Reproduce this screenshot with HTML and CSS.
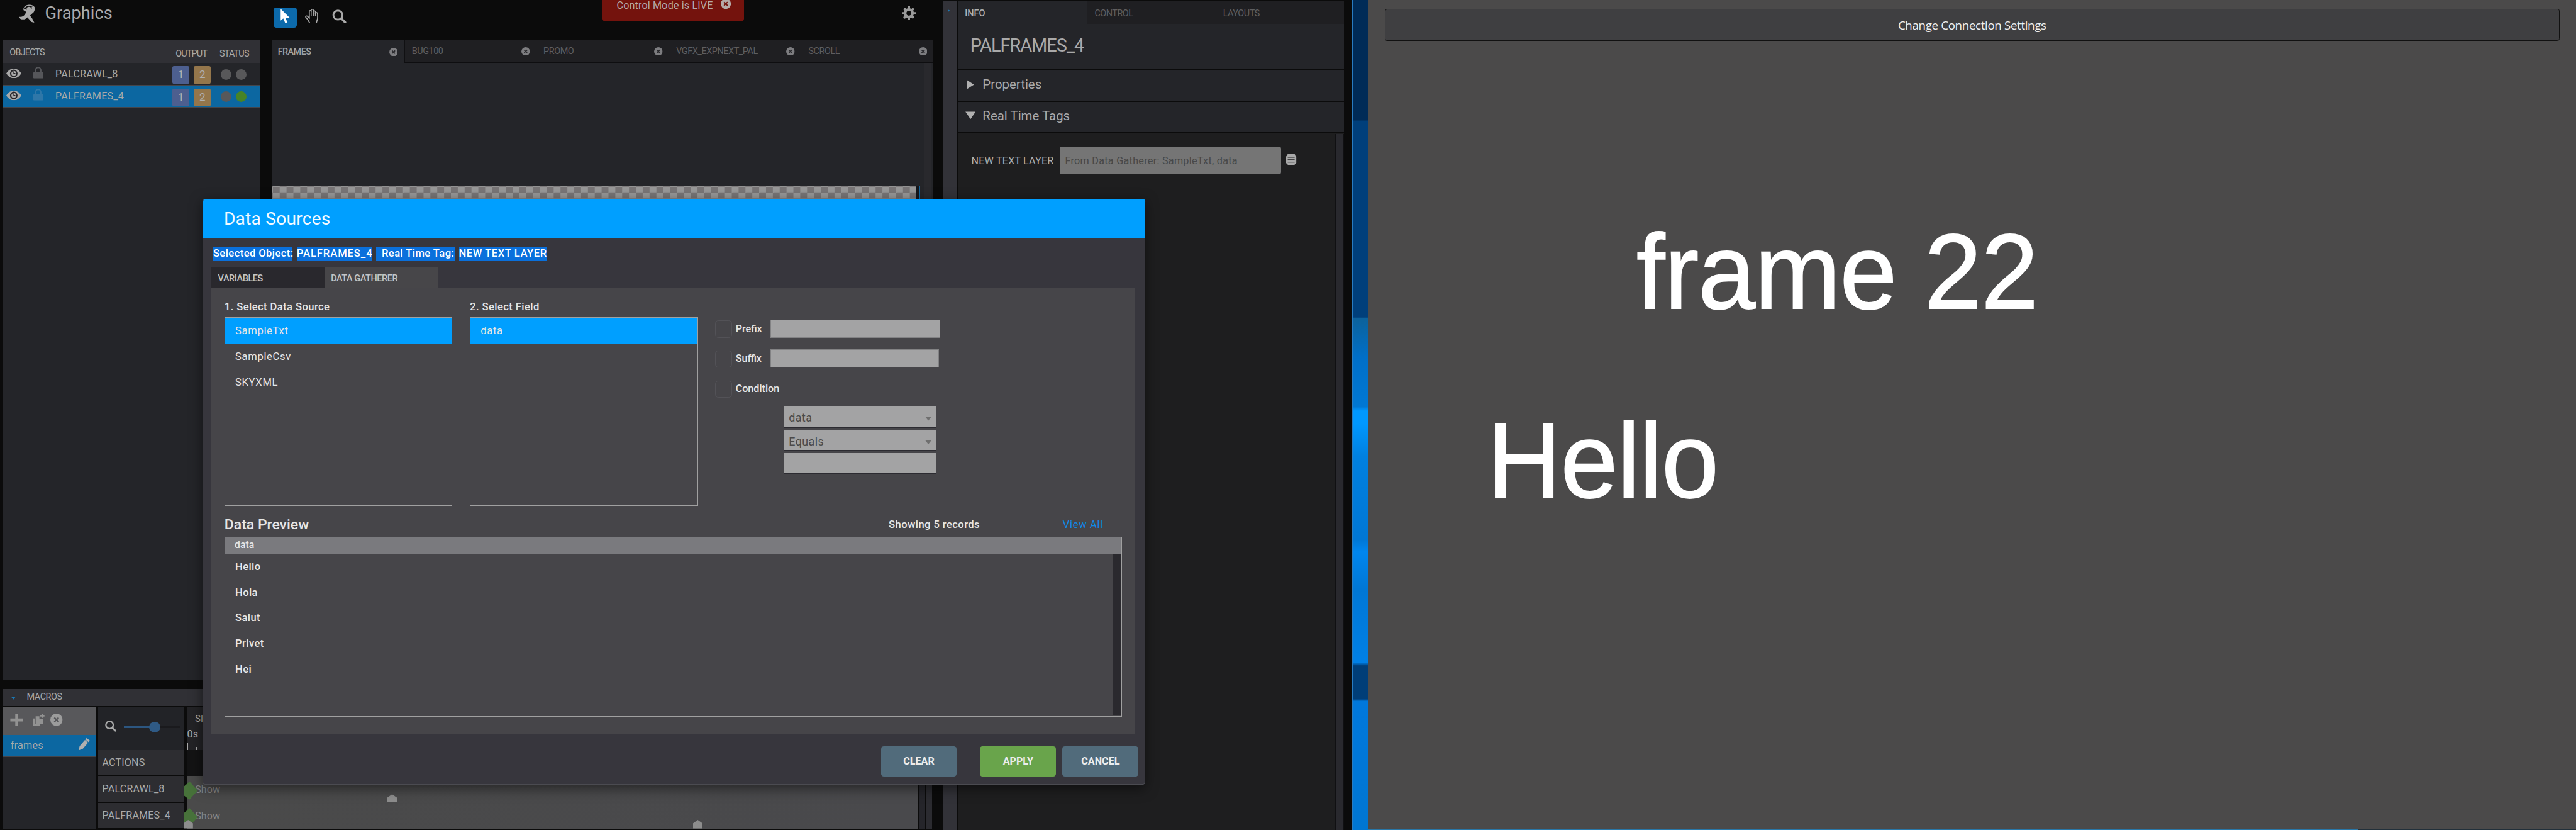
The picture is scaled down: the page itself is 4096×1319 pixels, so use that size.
FILE: index.html
```html
<!DOCTYPE html>
<html lang="en">
<head>
<meta charset="utf-8">
<title>Graphics</title>
<link rel="stylesheet" href="styles.css">
</head>
<body>
<svg width="0" height="0" class="defs">
  <symbol id="close" viewBox="0 0 20 20"><circle cx="10" cy="10" r="10" fill="currentColor"/><path d="M6.5 6.5l7 7M13.5 6.5l-7 7" stroke="var(--cross)" stroke-width="2.4"/></symbol>
  <symbol id="eye" viewBox="0 0 28 18"><path d="M0 9C4 2.500 9 0 14 0s10 2.500 14 9c-4 6.500-9 9-14 9S4 15.500 0 9z" fill="#a9a9a9"/><circle cx="14" cy="9" r="5.800" fill="none" stroke="#26262a" stroke-width="2.600"/><path d="M14 5v4h3" fill="none" stroke="#26262a" stroke-width="1.500"/></symbol>
  <symbol id="lock" viewBox="0 0 18 22"><path d="M4 11V6.500a5 5 0 0 1 10 0V11" fill="none" stroke="currentColor" stroke-width="2.400"/><rect x="0" y="10" width="18" height="12" rx="1.500" fill="currentColor"/></symbol>
  <symbol id="search" viewBox="0 0 26 26"><circle cx="10.500" cy="10.500" r="8.500" fill="none" stroke="currentColor" stroke-width="3.400"/><path d="M17 17l7 7" stroke="currentColor" stroke-width="4" stroke-linecap="round"/></symbol>
</svg>
<div class="desktop">
  <div class="app">
    <div class="workspace">
      <header class="topbar">
        <div class="brand">
          <svg class="logo" viewBox="0 0 36 34"><path d="M11 7C14 1 25-1 30 6" fill="none" stroke="#a9a9a9" stroke-width="2"/><circle cx="20" cy="9" r="4.500" fill="#a9a9a9"/><path d="M29 4c3 4 2 10-3 13l-4 4 4 5 4 8-5-1-8-9c-3 4-8 5-13 3l-3-4c5 1 9 0 12-5l2-4-5-3-1-4 8 4h5c3-1 4-4 3-7z" fill="#a9a9a9"/></svg>
          <span>Graphics</span>
        </div>
        <div class="tools">
          <span class="tool active"><svg viewBox="0 0 19 28"><path d="M0 0v23l5-4.500L9 28l4-2-4-8.500h8.500z" fill="#fff"/></svg></span>
          <svg class="hand" viewBox="0 0 26 28"><path d="M8 16V5.500c0-3 3.500-3 3.500 0V3c0-3 4-3 4 0v2.500c0-3 4-2.500 4 .5v3c0-2.500 4-2.500 4 .5V18l-2.500 9H9L5 20l-3.500-4c-1-2 1.500-3.500 3-2L8 17z" fill="none" stroke="#a9a9a9" stroke-width="2"/><path d="M11.500 5v8M15.500 5v8M19.500 7v6" stroke="#a9a9a9" stroke-width="1.800"/></svg>
          <svg class="zoomer"><use href="#search"/></svg>
        </div>
        <div class="livemode"><span>Control Mode is LIVE</span><svg><use href="#close"/></svg></div>
        <svg class="gear" viewBox="0 0 26 26"><circle cx="13" cy="13" r="7" fill="none" stroke="#9a9a9a" stroke-width="5"/><path d="M13 0v26M0 13h26M4 4l18 18M22 4L4 22" stroke="#9a9a9a" stroke-width="4.500"/><circle cx="13" cy="13" r="4.500" fill="#0b0b0b"/></svg>
      </header>

      <div class="upper">
        <section class="objects">
          <div class="objhead"><span>OBJECTS</span><span class="out">OUTPUT</span><span class="stat">STATUS</span></div>
          <div class="objrow">
            <span class="cell eye"><svg><use href="#eye"/></svg></span><span class="cell lock"><svg><use href="#lock"/></svg></span>
            <span class="name">PALCRAWL_8</span><span class="badge one">1</span><span class="badge two">2</span><i class="dot"></i><i class="dot"></i>
          </div>
          <div class="objrow selected">
            <span class="cell eye"><svg><use href="#eye"/></svg></span><span class="cell lock"><svg><use href="#lock"/></svg></span>
            <span class="name">PALFRAMES_4</span><span class="badge one">1</span><span class="badge two">2</span><i class="dot"></i><i class="dot on"></i>
          </div>
        </section>
        <section class="stage">
          <nav class="stagetabs">
            <div class="stab current"><span>FRAMES</span><svg><use href="#close"/></svg></div>
            <div class="stab"><span>BUG100</span><svg><use href="#close"/></svg></div>
            <div class="stab"><span>PROMO</span><svg><use href="#close"/></svg></div>
            <div class="stab"><span>VGFX_EXPNEXT_PAL</span><svg><use href="#close"/></svg></div>
            <div class="stab"><span>SCROLL</span><svg><use href="#close"/></svg></div>
          </nav>
          <div class="stagebody"><div class="view"><div class="canvas"></div></div><div class="vscroll"></div></div>
        </section>
      </div>

      <section class="macros">
        <div class="machead"><i class="tri-down small"></i><span>MACROS</span></div>
        <div class="macbody">
          <div class="maclist">
            <div class="macbar">
              <svg class="plus" viewBox="0 0 24 24"><path d="M12 0v24M0 12h24" stroke="#929292" stroke-width="5.500"/></svg>
              <svg class="copy" viewBox="0 0 22 24"><path d="M0 9h4v11h9v4H0zM5 5h7v5h7v9H5z" fill="#929292"/><path d="M17.500 0v8M13.500 4h8" stroke="#929292" stroke-width="3"/></svg>
              <svg class="del"><use href="#close"/></svg>
            </div>
            <div class="macitem"><span>frames</span><svg viewBox="0 0 22 24"><path d="M0 24l2-8L15 1l6 5L8 21z" fill="#b0b0b0"/><path d="M12 4l7 6" stroke="#0c67a1" stroke-width="1.300"/></svg></div>
          </div>
          <div class="actions">
            <div class="zoombar"><svg><use href="#search"/></svg><div class="slider"><i></i></div></div>
            <div class="act head">ACTIONS</div>
            <div class="act">PALCRAWL_8</div>
            <div class="act last">PALFRAMES_4</div>
          </div>
          <div class="timeline">
            <div class="ruler"><span class="si">SI</span><span class="zero">0s</span><div class="ticks"><i></i><i></i></div></div>
            <div class="gap"></div>
            <div class="track"><span class="key"></span><span class="show">Show</span><span class="mark m1"></span></div>
            <div class="track"><span class="key"></span><span class="show">Show</span><span class="mark m2"></span><span class="mark m3"></span></div>
          </div>
          <div class="tscroll"></div><div class="tscroll b"></div>
        </div>
      </section>
    </div>

    <div class="splitter"><i></i></div>

    <aside class="info">
      <nav class="infotabs"><div class="itab current">INFO</div><div class="itab">CONTROL</div><div class="itab">LAYOUTS</div></nav>
      <h1>PALFRAMES_4</h1>
      <div class="sect first"><i class="tri-right"></i><span>Properties</span></div>
      <div class="sect"><i class="tri-down"></i><span>Real Time Tags</span></div>
      <div class="infobody">
        <div class="tagrow">
          <label>NEW TEXT LAYER</label>
          <div class="taginput">From Data Gatherer: SampleTxt, data</div>
          <svg viewBox="0 0 19 22"><rect x="2" width="15" height="22" rx="4" fill="#a9a9a9"/><rect y="4" width="19" height="15" rx="2" fill="#a9a9a9"/><path d="M3 7h13M3 11.500h13M3 16h13" stroke="#1e1e1f" stroke-width="1.300"/></svg>
        </div>
        <div class="iscroll"></div>
      </div>
    </aside>
  </div>

  <div class="wallpaper"></div>

  <main class="player">
    <button class="connect">Change Connection Settings</button>
    <div class="big frame">frame 22</div>
    <div class="big hello">Hello</div>
    <div class="taskline"></div>
  </main>

  <div class="dialog">
    <div class="dtitle">Data Sources</div>
    <div class="dbody">
      <div class="selinfo"><mark class="s1">Selected Object:</mark><mark class="s2">PALFRAMES_4</mark><mark class="s3">Real Time Tag:</mark><mark class="s4">NEW TEXT LAYER</mark></div>
      <nav class="dtabs"><div>VARIABLES</div><div class="current">DATA GATHERER</div></nav>
      <div class="dpanel">
        <div class="pick">
          <div class="col">
            <label>1. Select Data Source</label>
            <ul><li class="sel">SampleTxt</li><li>SampleCsv</li><li>SKYXML</li></ul>
          </div>
          <div class="col">
            <label>2. Select Field</label>
            <ul><li class="sel">data</li></ul>
          </div>
          <div class="opts">
            <div class="opt"><i class="box"></i><span>Prefix</span><div class="inp"></div></div>
            <div class="opt"><i class="box"></i><span>Suffix</span><div class="inp short"></div></div>
            <div class="opt"><i class="box"></i><span>Condition</span></div>
            <div class="select">data<i></i></div>
            <div class="select">Equals<i></i></div>
            <div class="select"></div>
          </div>
        </div>
        <div class="prevhead"><h2>Data Preview</h2><span class="count">Showing 5 records</span><a>View All</a></div>
        <div class="table">
          <div class="th">data</div>
          <div class="rows">
            <div class="list"><div>Hello</div><div>Hola</div><div>Salut</div><div>Privet</div><div>Hei</div></div>
            <div class="bar"></div>
          </div>
        </div>
      </div>
      <div class="buttons"><button class="clear">CLEAR</button><button class="apply">APPLY</button><button>CANCEL</button></div>
    </div>
  </div>
</div>
</body>
</html>
```
FILE: styles.css
```css
/* 1rem = 10 design pixels */
html { font-size: 8.512px; }
* { box-sizing: border-box; }
body { margin: 0; background: #0b0b0b; overflow: hidden; font-family: Roboto, "Liberation Sans", sans-serif; color: #a9a9a9; white-space: nowrap; }
.defs { position: absolute; }
svg { display: block; flex: none; }
ul, h1, h2 { margin: 0; padding: 0; font-weight: 400; list-style: none; }
button { padding: 0; font-family: inherit; }

.desktop { position: relative; display: flex; width: 4096px; height: 1319px; overflow: hidden; }
.app { display: flex; width: 252.6rem; flex: none; background: #0b0b0b; }
.workspace { display: flex; flex-direction: column; width: 176.2rem; flex: none; padding-left: .6rem; }

/* top bar */
.topbar { display: flex; align-items: flex-start; height: 7.4rem; flex: none; }
.brand { display: flex; width: 50.5rem; padding-left: 2.8rem; gap: 1.4rem; font-size: 3.2rem; line-height: 5.1rem; }
.logo { width: 3.6rem; height: 3.4rem; margin-top: .8rem; }
.tools { display: flex; width: 61.5rem; }
.tool.active { display: flex; width: 4.4rem; height: 3.8rem; margin-top: 1.4rem; padding: .2rem 0 0 1.3rem; border-radius: .5rem; background: #0c6aab; }
.tool svg { width: 1.9rem; height: 2.7rem; }
.hand { width: 2.6rem; height: 2.8rem; margin: 1.6rem 0 0 1.5rem; }
.zoomer { width: 2.7rem; height: 2.6rem; margin: 1.8rem 0 0 2.4rem; }
.livemode { display: flex; width: 26.4rem; height: 4.05rem; padding-left: 2.6rem; gap: 1.5rem; border-radius: 0 0 .5rem .5rem; background: #74130d; color: #b5aaa8; font-size: 1.9rem; line-height: 2rem; letter-spacing: .016rem; }
.livemode svg { width: 1.9rem; height: 1.9rem; margin-top: -.2rem; --cross: #74130d; }
.gear { width: 2.6rem; height: 2.6rem; margin: 1.2rem 0 0 29.5rem; }

/* objects */
.upper { display: flex; gap: 2.1rem; height: 119.6rem; flex: none; }
.objects { width: 48rem; background: #242529; }
.objhead { display: flex; height: 4.4rem; padding-left: 1.2rem; background: #303035; font-size: 1.7rem; line-height: 5rem; letter-spacing: -.1rem; }
.objhead span { width: 31rem; }
.objhead .out { width: 8.2rem; line-height: 5.4rem; }
.objhead .stat { width: 6rem; line-height: 5.4rem; }
.objrow { display: flex; align-items: center; height: 4.15rem; border-bottom: .15rem solid #45454a; }
.cell { display: flex; align-items: center; align-self: stretch; justify-content: center; border-right: .15rem solid #45454a; }
.cell.eye { width: 4.15rem; }
.eye svg { width: 2.8rem; height: 1.8rem; margin-top: -.2rem; }
.cell.lock { width: 4.3rem; color: #55565a; padding-left: .6rem; }
.lock svg { width: 1.8rem; height: 2.2rem; margin-top: -.5rem; }
.selected { background: #0c67a1; }
.selected .lock { color: #2f77a8; }
.selected .cell { border-color: #1a4f78; }
.name { width: 23.15rem; padding-left: 1.3rem; font-size: 1.9rem; letter-spacing: .02rem; }
.badge { width: 3.2rem; height: 3.3rem; margin: .4rem .8rem 0 0; border-radius: .3rem; background: #4d5f8f; color: #b0b0b0; font-size: 2rem; line-height: 3.1rem; text-align: center; }
.badge.two { margin-right: 1.85rem; background: #94764b; }
.dot { width: 2.05rem; height: 2.05rem; margin: .2rem .75rem 0 0; border-radius: 50%; background: #58585a; }
.dot.on { background: #478326; }

/* stage */
.stage { display: flex; flex-direction: column; width: 123.6rem; background: #242529; }
.stagetabs { display: grid; grid-template-columns: 24.8rem 24.6rem 24.8rem 24.7rem 24.7rem; height: 4.4rem; flex: none; }
.stab { display: flex; justify-content: space-between; align-items: center; height: 4.3rem; padding: .3rem 1.1rem 0 1.3rem; border-left: .2rem solid #101012; border-bottom: .25rem solid #0e0e10; background: #1f1f22; color: #5e5e60; font-size: 1.7rem; letter-spacing: -.055rem; }
.stab.current { border: 0; padding-left: 1.2rem; padding-right: 1.2rem; background: #242529; color: #a3a3a3; font-weight: 500; letter-spacing: -.07rem; }
.stab svg { width: 1.6rem; height: 1.6rem; color: #7d7d80; --cross: #2a2a2d; }
.stagebody { display: flex; flex: 1; }
.view { width: 122rem; padding-top: 22.9rem; border-right: .2rem solid #0e0e10; }
.canvas { width: 121.2rem; height: 60rem; border: .2rem solid #14659c; padding-right: .6rem; background: conic-gradient(#979797 25%, #787576 0 50%, #979797 0 75%, #787576 0) .1rem .1rem / 2.56rem 2.2rem content-box, #15161a; }
.vscroll { width: 1.2rem; background: #29292d; }

/* macros */
.macros { width: 173.6rem; margin-top: 1.6rem; flex: 1; }
.machead { display: flex; align-items: center; height: 3.2rem; padding-left: 1.5rem; background: #303035; font-size: 1.7rem; letter-spacing: -.06rem; }
.machead span { padding-left: 2.1rem; margin-top: -.2rem; }
.macbody { display: flex; margin-top: .2rem; height: 22.8rem; }
.maclist { width: 17.4rem; background: #242529; }
.macbar { display: flex; height: 5.2rem; padding: 1.2rem 0 0 1.3rem; background: #58585b; }
.plus { width: 2.5rem; height: 2.4rem; }
.copy { width: 2.3rem; height: 2.4rem; margin-left: 1.7rem; }
.del { width: 2.3rem; height: 2.3rem; margin-left: 1rem; color: #9c9c9c; --cross: #58585b; }
.macitem { display: flex; justify-content: space-between; align-items: center; height: 4.1rem; padding: 0 1.1rem 0 1.4rem; border-bottom: .15rem solid #45454a; background: #0c67a1; font-size: 1.9rem; letter-spacing: .02rem; }
.macitem svg { width: 2.2rem; height: 2.4rem; margin-top: -.5rem; }
.actions { width: 16rem; margin-left: .3rem; }
.zoombar { display: flex; height: 8rem; padding: 2.4rem 0 0 1.3rem; background: #222327; }
.zoombar svg { width: 2.1rem; height: 2.3rem; }
.slider { width: 10.5rem; height: .3rem; margin: 1.2rem 0 0 1.4rem; background: linear-gradient(90deg, #2c5680 50%, #1a1a1d 0); }
.slider i { display: block; width: 2.1rem; height: 2.1rem; margin: -.9rem 0 0 4.8rem; border-radius: 50%; background: #2f5a85; }
.act { display: flex; align-items: center; height: 4.8rem; margin-bottom: .2rem; padding-left: .8rem; background: #2d2d31; font-size: 1.9rem; letter-spacing: .015rem; }
.act.head { height: 4.7rem; }
.act.last { height: 4.7rem; margin-bottom: 0; }
.timeline { display: flex; flex-direction: column; width: 137.2rem; padding-left: .55rem; }
.ruler { height: 8rem; border-left: .15rem solid #3a3a3d; background: #232326; }
.ruler span { display: block; font-size: 1.7rem; line-height: 2rem; }
.ruler .si { padding: .6rem 0 0 1.5rem; }
.ruler .zero { margin-top: .9rem; font-size: 1.9rem; }
.ticks { display: flex; align-items: flex-end; gap: 1.5rem; height: 1.6rem; margin-top: .5rem; }
.ticks i { width: .15rem; height: 1.6rem; background: #a9a9a9; }
.ticks i + i { height: .8rem; }
.ruler .si { margin-top: .6rem; }
.gap { height: 5rem; background: #131314; }
.track { position: relative; height: 4.95rem; border-bottom: .15rem solid #58585a; background: linear-gradient(90deg, #4a4a4a, #49494c); }
.key { position: absolute; left: -.6rem; top: 1rem; width: 2.7rem; height: 3.4rem; background: #47723a; clip-path: polygon(30% 10%, 42% 0, 100% 50%, 42% 100%, 0 75%, 0 30%); }
.show { display: block; padding-left: 1.6rem; color: #858585; font-size: 1.9rem; line-height: 5.1rem; }
.mark { position: absolute; width: 1.8rem; height: 1.6rem; bottom: 0; background: #8d8d8d; clip-path: polygon(0 40%, 50% 0, 100% 40%, 100% 100%, 0 100%); }
.m1 { left: 37.5rem; bottom: -.15rem; }
.m2 { left: -.6rem; }
.m3 { left: 94.6rem; }
.tscroll { width: 1.1rem; margin-left: .2rem; background: #25252a; }
.tscroll.b { background: #2b2b30; }

/* splitter */
.splitter { width: 2.5rem; margin-top: .2rem; padding: 1.6rem 0 0 .9rem; background: #323238; }
.splitter i { display: block; width: 0; border: .35rem solid transparent; border-left: .5rem solid #1c78b5; }

/* info panel */
.info { display: flex; flex-direction: column; width: 72rem; margin-left: .35rem; padding-top: .2rem; }
.infotabs { display: grid; grid-template-columns: 24rem 24rem 24rem; height: 4.3rem; flex: none; background: #242529; }
.itab { padding-left: 1.3rem; border-left: .2rem solid #101012; border-bottom: .25rem solid #0e0e10; background: #1f1f22; color: #5e5e60; font-size: 1.7rem; line-height: 4.6rem; letter-spacing: -.06rem; }
.itab.current { border: 0; padding-left: 1.2rem; background: #242529; color: #b0b0b0; font-weight: 500; letter-spacing: 0; }
.info h1 { height: 8.3rem; flex: none; padding: 0 0 0 2.2rem; background: #242529; font-size: 3.4rem; line-height: 8rem; letter-spacing: -.12rem; }
.sect { display: flex; align-items: center; height: 5.6rem; flex: none; margin-top: .2rem; padding-left: 1.3rem; background: #242529; font-size: 2.4rem; }
.sect.first { margin-top: .4rem; }
.sect span { padding-bottom: .4rem; }
.tri-right { width: 1.4rem; height: 1.8rem; margin: -.4rem 1.6rem 0 .2rem; background: #b0b0b0; clip-path: polygon(0 0, 100% 50%, 0 100%); }
.tri-down { width: 1.9rem; height: 1.4rem; margin: -.5rem 1.3rem 0 0; background: #b0b0b0; clip-path: polygon(0 0, 100% 0, 50% 100%); }
.tri-down.small { width: .8rem; height: .5rem; margin: .3rem 0 0; background: #1c78b5; }
.infobody { display: flex; justify-content: space-between; flex: 1; margin-top: .2rem; background: #1e1e1f; }
.tagrow { display: flex; align-items: center; align-self: flex-start; padding: 2.6rem 0 0 2.4rem; }
.tagrow label { width: 16.5rem; font-size: 1.9rem; letter-spacing: .02rem; color: #b0b0b0; }
.taginput { width: 41.4rem; height: 5.2rem; padding-left: 1rem; border-radius: .4rem; background: #757575; color: #484848; font-size: 1.9rem; line-height: 5.3rem; letter-spacing: .034rem; }
.tagrow svg { width: 1.9rem; height: 2.2rem; margin: -.5rem 0 0 .95rem; }
.iscroll { width: 1.6rem; margin-top: .2rem; border: solid #101012; border-width: 0 .2rem; background: #29292e; }

/* wallpaper strip between the two windows */
.wallpaper { width: 3rem; flex: none; border-left: .2rem solid #2a7cc0; background: linear-gradient(#002b57 14.45%, #003f7b 14.6% 38.2%, #0c629c 38.4%, #006fc8 43%, #0078d4 49%, #0098ff 49.5% 51%, #0080e0 55%, #0077d5 65%, #0086ee 66.500%, #0077d5 71%, #0080e6 79.800%, #003e78 80.200% 84.200%, #0078dc 84.500%, #0076d2); }

/* player */
.player { display: flex; flex-direction: column; flex: 1; background: #4b4a4a; }
.connect { width: 219.4rem; height: 6rem; margin: 1.6rem 0 0 3.1rem; flex: none; border: .2rem solid #111; border-radius: .4rem; background: #3f3f41; color: #f0f0f0; font: 2.2rem "Open Sans", "Noto Sans", sans-serif; letter-spacing: -.04rem; }
.big { color: #fff; font: 19.2rem/20rem "Liberation Sans", Arial, sans-serif; transform: scaleY(1.035); transform-origin: 0 83%; -webkit-text-stroke: .2rem #fff; }
.frame { margin: 33.4rem 0 0 50.1rem; letter-spacing: -.1rem; }
.hello { margin: 15.2rem 0 0 22.2rem; letter-spacing: -.12rem; }
.taskline { height: .25rem; margin-top: auto; background: linear-gradient(90deg, #2877a8 82%, #22303a 82%); }

/* dialog */
.dialog { position: absolute; left: 37.85rem; top: 37.15rem; width: 176.1rem; height: 109.4rem; display: flex; flex-direction: column; border-radius: .5rem; background: #37363d; border: .15rem solid #4b4b51; border-top: 0; box-shadow: 0 .6rem 2.4rem rgba(0, 0, 0, .5); color: #e6e6e6; font-size: 1.95rem; font-weight: 500; letter-spacing: .05rem; }
.dtitle { height: 7.3rem; flex: none; margin: 0 -.05rem; padding-left: 3.9rem; border-radius: .5rem .5rem 0 0; background: #009fff; color: #f4faff; font-size: 3.3rem; font-weight: 400; line-height: 7.6rem; letter-spacing: .03rem; }
.dbody { padding: 1.6rem 1.9rem 0 1.55rem; }
.selinfo { display: flex; height: 2.6rem; padding-left: .3rem; line-height: 2.7rem; color: #fff; }
.selinfo mark { background: #0a70dc; color: inherit; margin-right: .8rem; }
.s1 { width: 14.8rem; }
.s2 { width: 14rem; letter-spacing: .11rem; }
.s3 { width: 14.7rem; padding-left: 1.1rem; }
.s4 { width: 16.5rem; letter-spacing: .065rem; }
.dtabs { display: flex; margin-top: 1.2rem; font-size: 1.7rem; line-height: 4.4rem; letter-spacing: -.05rem; }
.dtabs div { width: 21.1rem; height: 4rem; padding-left: 1.2rem; background: #29282d; color: #c4c4c4; }
.dtabs .current { background: #474649; }
.dpanel { height: 83.1rem; padding: 1.9rem 2.4rem 0; background: #464549; }
.pick { display: flex; gap: 3.25rem; height: 38.8rem; }
.col { width: 42.6rem; }
.col label { display: block; height: 3.5rem; line-height: 3rem; }
.col ul { height: 35.2rem; border: .2rem solid #a0a0a0; }
.col li { height: 4.8rem; padding-left: 1.9rem; line-height: 4.9rem; letter-spacing: .08rem; }
.col .sel { background: #009fff; }
.opts { width: 46rem; padding-top: 4rem; }
.opt { display: flex; align-items: center; height: 3.4rem; margin-bottom: 2.2rem; letter-spacing: 0; font-size: 1.9rem; }
.box { width: 3.1rem; height: 3.2rem; border: .15rem solid #535257; border-radius: .6rem; }
.opt span { width: 7.2rem; padding-left: .7rem; margin-top: -.2rem; }
.inp { width: 31.7rem; height: 3.4rem; margin-top: -.2rem; border: .15rem solid #828284; background: #a3a3a4; }
.inp.short { width: 31.5rem; }
.select { display: flex; justify-content: space-between; width: 28.6rem; height: 4.4rem; margin-left: 12.75rem; padding: 0 1rem; border-bottom: .35rem solid #2c2b31; background: linear-gradient(#464549 .4rem, #a3a3a4 0); color: #4a4a4a; font-size: 2.1rem; font-weight: 400; line-height: 5.1rem; }
.opt + .select { margin-top: -1.1rem; }
.select i { width: 1.1rem; height: .7rem; margin-top: 2.4rem; background: #6f6f6f; clip-path: polygon(0 0, 100% 0, 50% 100%); }
.prevhead { display: flex; align-items: center; height: 5.7rem; padding-top: 1.1rem; }
.prevhead h2 { width: 124.1rem; font-size: 2.7rem; font-weight: 500; letter-spacing: 0; }
.count { width: 32.5rem; }
.prevhead a { color: #1189e6; font-weight: 400; letter-spacing: .08rem; }
.table { height: 33.6rem; border: .2rem solid #a0a0a0; }
.th { height: 3rem; padding-left: 1.8rem; background: #7a7a7e; font-size: 1.85rem; line-height: 2.8rem; letter-spacing: 0; }
.rows { display: flex; justify-content: space-between; height: 30.2rem; }
.list div { height: 4.8rem; padding-left: 1.9rem; line-height: 4.9rem; }
.bar { width: 1.6rem; border: .2rem solid #050505; background: #2a292e; }
.buttons { display: flex; justify-content: flex-end; gap: 1.2rem; margin: 2.4rem -.75rem 0; }
.buttons button { width: 14.2rem; height: 5.6rem; border: 0; border-radius: .5rem; background: #516b7b; color: #ececec; font-size: 1.9rem; font-weight: 700; }
.buttons .clear { width: 14.1rem; margin-right: 3.2rem; }
.buttons .apply { background: #69a44b; }
```
